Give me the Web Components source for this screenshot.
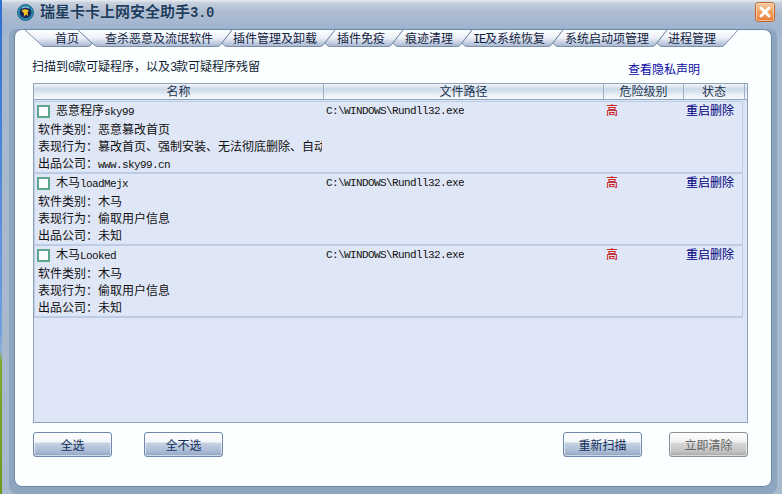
<!DOCTYPE html>
<html lang="zh">
<head>
<meta charset="utf-8">
<title>瑞星卡卡上网安全助手3.0</title>
<style>
html,body{margin:0;padding:0;width:782px;height:494px;overflow:hidden}
body{font:12px/17px "Noto Sans CJK SC",sans-serif;color:#111;
background:linear-gradient(#2f6fd0 0,#6f9fe0 330px,#8fb0d8 350px,#7fa828 362px,#6d9a1e 494px)}
</style>
</head>
<body>
<rx-app>
  <rx-titlebar slot="title">瑞星卡卡上网安全助手<rx-l size="14" ls="-.4" bold>3.0</rx-l></rx-titlebar>
  <rx-tabs slot="tabs">
    <rx-tab w="53" pad="30" kind="first">首页</rx-tab>
    <rx-tab w="154" pad="27" kind="second">查杀恶意及流氓软件</rx-tab>
    <rx-tab w="103" pad="1">插件管理及卸载</rx-tab>
    <rx-tab w="68" pad="2">插件免疫</rx-tab>
    <rx-tab w="69" pad="2">痕迹清理</rx-tab>
    <rx-tab w="91" pad="1"><rx-l size="12" ls="-1.2">IE</rx-l>及系统恢复</rx-tab>
    <rx-tab w="104" pad="2">系统启动项管理</rx-tab>
    <rx-tab w="71" pad="1" kind="last">进程管理</rx-tab>
  </rx-tabs>
  <rx-info slot="info">
    扫描到<rx-l size="12" ls="-1.2">0</rx-l>款可疑程序&#xFF0C;以及<rx-l size="12" ls="-1.2">3</rx-l>款可疑程序残留
    <span slot="link">查看隐私声明</span>
  </rx-info>
  <rx-table slot="table">
    <rx-row risk="高" action="重启删除" path="C:\WINDOWS\Rundll32.exe">
      <span slot="name">恶意程序<rx-l>sky99</rx-l></span>
      <div>软件类别&#xFF1A;恶意篡改首页</div>
      <div>表现行为&#xFF1A;篡改首页、强制安装、无法彻底删除、自动</div>
      <div>出品公司&#xFF1A;<rx-l>www.sky99.cn</rx-l></div>
    </rx-row>
    <rx-row risk="高" action="重启删除" path="C:\WINDOWS\Rundll32.exe">
      <span slot="name">木马<rx-l>loadMejx</rx-l></span>
      <div>软件类别&#xFF1A;木马</div>
      <div>表现行为&#xFF1A;偷取用户信息</div>
      <div>出品公司&#xFF1A;未知</div>
    </rx-row>
    <rx-row risk="高" action="重启删除" path="C:\WINDOWS\Rundll32.exe">
      <span slot="name">木马<rx-l>Looked</rx-l></span>
      <div>软件类别&#xFF1A;木马</div>
      <div>表现行为&#xFF1A;偷取用户信息</div>
      <div>出品公司&#xFF1A;未知</div>
    </rx-row>
  </rx-table>
  <rx-actions slot="actions">
    <rx-button>全选</rx-button>
    <rx-button>全不选</rx-button>
    <rx-button slot="right">重新扫描</rx-button>
    <rx-button slot="right" disabled>立即清除</rx-button>
  </rx-actions>
</rx-app>
<script>
function def(name, css, html, setup){
  customElements.define(name, class extends HTMLElement{
    constructor(){super();this.attachShadow({mode:'open'}).innerHTML='<style>'+css+'</style>'+html;}
    connectedCallback(){ if(setup) setup(this,this.shadowRoot); }
  });
}
def('rx-l',':host{font-family:"Liberation Mono",monospace;font-size:11px;letter-spacing:-.6px}','<slot></slot>',(h)=>{
  if(h.hasAttribute('size')) h.style.fontSize=h.getAttribute('size')+'px';
  if(h.hasAttribute('ls')) h.style.letterSpacing=h.getAttribute('ls')+'px';
  if(h.hasAttribute('bold')) h.style.fontWeight='bold';
});
def('rx-app',`
:host{display:flex;flex-direction:column;box-sizing:border-box;width:780px;height:494px;margin-left:2px;
  background:linear-gradient(#e8ecf1 0,#c6cfdc 3px,#aebccf 12px,#9fb3d1 29px,#a8b9ce 40px);}
.panel{box-sizing:border-box;margin:0 10px 7px 12px;height:458px;background:#fbffff;border:1px solid #6d86a5;border-radius:8px;display:flex;flex-direction:column;box-shadow:-5px 0 0 #8ea5c0,5px 0 0 #8ea5c0,0 7px 0 #8ea5c0,5px 7px 0 #8ea5c0,-5px 7px 0 #8ea5c0}
`,`<slot name="title"></slot><div class="panel"><slot name="tabs"></slot><slot name="info"></slot><slot name="table"></slot><slot name="actions"></slot></div>`);
def('rx-titlebar',`
:host{display:flex;align-items:center;height:29px;flex:none;box-sizing:border-box;padding:0 0 5px 15px;font-size:15px;font-weight:700;color:#1d3d5e;line-height:20px;text-shadow:0 0 1px #dfe6ef}
.icon{flex:none;width:17px;height:17px;margin-right:6px}
.t{flex:1;white-space:nowrap}
.x{flex:none;width:20px;height:20px;margin-right:7px}
`,`<svg class="icon" viewBox="0 0 17 17"><circle cx="8.5" cy="8.5" r="8" fill="#2a8cb4"/><circle cx="8.5" cy="8.5" r="8" fill="none" stroke="#14557c" stroke-width=".8"/><circle cx="8.5" cy="8.5" r="5.8" fill="#1a2457"/><path d="M4.5 6.5 8 5l4 1.5-1.5 2 .8 3.5-2.3-1.5L6.6 13l.6-3.5z" fill="#f1c41f"/><path d="M5 4.2 8.5 3 12 4.2" stroke="#a9e0ec" fill="none"/></svg>
<span class="t"><slot></slot></span>
<svg class="x" viewBox="0 0 20 20"><defs><linearGradient id="o" x1="0" y1="0" x2="0" y2="1"><stop offset="0" stop-color="#f8cfa6"/><stop offset=".5" stop-color="#f0a060"/><stop offset="1" stop-color="#e57b2e"/></linearGradient></defs><rect x=".5" y=".5" width="19" height="19" rx="3" fill="url(#o)" stroke="#c4622a"/><rect x="1.5" y="1.5" width="17" height="17" rx="2" fill="none" stroke="#f9dcc0" stroke-opacity=".7"/><path d="M6 6l8 8M14 6l-8 8" stroke="#fff" stroke-width="3" stroke-linecap="round"/></svg>`);
def('rx-tabs',`:host{display:flex;height:17px;margin-left:10px;flex:none}`,`<slot></slot>`);
def('rx-tab',`
:host{display:block;position:relative;flex:none;box-sizing:border-box;height:17px;line-height:15px;white-space:nowrap;color:#12233f}
svg{position:absolute;left:0;top:0;overflow:visible;width:100%;height:17px}
.txt{position:relative;display:block}
`,`<svg><defs><linearGradient id="g" gradientUnits="userSpaceOnUse" x1="0" y1="0" x2="0" y2="17"><stop offset="0" stop-color="#fdfeff"/><stop offset=".45" stop-color="#eef2f8"/><stop offset=".75" stop-color="#c3cfe2"/><stop offset="1" stop-color="#a3b4ce"/></linearGradient></defs><path id="f" fill="url(#g)"/><path id="s" fill="none" stroke="#7c8fab"/></svg><span class="txt"><slot></slot></span>`,
(h,r)=>{
  const w=+h.getAttribute('w'),k=h.getAttribute('kind')||'';
  h.style.width=w+'px';h.style.paddingLeft=h.getAttribute('pad')+'px';
  let left;
  if(k==='first') left=['M0 0','L18 16.5'];
  else if(k==='second') left=['M0 0','L14 13','Q17 16.5 20 16.5'];
  else left=['M0 0','L-10 13','Q-8 16.5 -5 16.5'];
  const start=left.slice(1).join(' ');
  let rp;
  if(k==='first') rp=`L${w+10} 16.5 Q${w+13} 16.5 ${w+14} 13 L${w} 0`;
  else if(k==='last') rp=`L${w-15} 16.5 L${w} 0`;
  else rp=`L${w-15} 16.5 Q${w-12} 16.5 ${w-11} 14 L${w} 0`;
  r.getElementById('f').setAttribute('d',`M0 0 ${start} ${rp} Z`);
  r.getElementById('s').setAttribute('d',`M0 0 ${start} ${rp}`);
});
def('rx-info',`
:host{display:flex;justify-content:space-between;margin:12px 71px 7px 17px;height:17px;line-height:14px;color:#101c33;flex:none}
.l{white-space:nowrap}
.r{padding-top:3px;color:#0a0aa5;white-space:nowrap}
`,`<span class="l"><slot></slot></span><span class="r"><slot name="link"></slot></span>`);
def('rx-table',`
:host{display:block;box-sizing:border-box;margin:0 23px 0 18px;height:340px;border:1px solid #8fa4b8;background:#dde5f6;flex:none}
.h{display:grid;grid-template-columns:290px 280px 80px 61px 1fr;height:16px;box-sizing:border-box;border-bottom:1px solid #8fa4b8;line-height:14px;text-align:center;color:#223350;
 background:linear-gradient(#f3f7fb 0,#cdd9e8 35%,#e8eff6 70%,#f6f9fc 100%)}
.h span{border-right:1px solid #9fb1c4;height:15px;box-sizing:border-box}
.h span:last-child{border:0}
.b{margin:1px 4px 0 0;border-top:1px solid #bacde5}
`,`<div class="h"><span>名称</span><span>文件路径</span><span>危险级别</span><span>状态</span><span></span></div><div class="b"><slot></slot></div>`);
def('rx-row',`
:host{display:grid;grid-template-columns:288px 280px 80px 1fr;box-sizing:border-box;height:72px;background:#dfe6f6;border-left:1px solid #bacde5;border-right:1px solid #bacde5;border-bottom:2px solid #bacde5;white-space:nowrap}
.c1{overflow:hidden;width:287px}
.top{display:flex;height:18px;align-items:flex-start;padding-left:2px}
.box{flex:none;box-sizing:border-box;width:13px;height:13px;margin-top:3px;margin-right:6px;border:2px solid #5ba68c;background:#fff}
.name{line-height:15px;color:#111}
.d{padding-left:3px;line-height:17px}
.k,.a{line-height:15px}
.p{padding-left:3px;margin-top:2px;font:11px/15px "Liberation Mono",monospace;letter-spacing:-.6px}
.k{padding-left:3px;color:#c00000}
.a{padding-left:3px;color:#000080}
`,`<div class="c1"><div class="top"><span class="box"></span><span class="name"><slot name="name"></slot></span></div><div class="d"><slot></slot></div></div><div class="p"></div><div class="k"></div><div class="a"></div>`,
(h,r)=>{
  r.querySelector('.p').textContent=h.getAttribute('path');
  r.querySelector('.k').textContent=h.getAttribute('risk');
  r.querySelector('.a').textContent=h.getAttribute('action');
});
def('rx-actions',`
:host{display:flex;margin:9px 23px 0 18px;flex:none;gap:32px}
.rt{display:flex;gap:27px;margin-left:auto}
`,`<slot></slot><div class="rt"><slot name="right"></slot></div>`);
def('rx-button',`
:host{display:block;box-sizing:border-box;width:79px;height:25px;border:1px solid #6f88aa;border-radius:3px;text-align:center;line-height:23px;color:#12305a;
 background:linear-gradient(#fdfeff 0,#f4f7fb 38%,#c6d2e3 45%,#a9bad3 80%,#8fa4c4 100%);box-shadow:inset 0 0 0 1px rgba(255,255,255,.55)}
:host([disabled]){border-color:#8a8f96;color:#666;background:linear-gradient(#fdfdfd 0,#f1f1f1 38%,#d6d6d6 45%,#c2c2c2 80%,#a8a8a8 100%)}
`,`<slot></slot>`);
</script>
</body>
</html>
